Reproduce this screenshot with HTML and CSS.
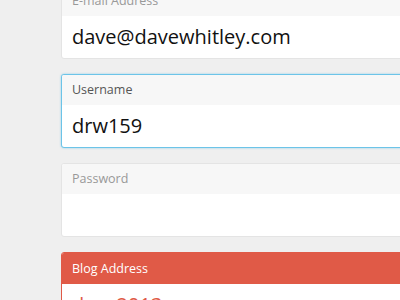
FILE: index.html
```html
<!DOCTYPE html>
<html>
<head>
<meta charset="utf-8">
<link rel="stylesheet" href="styles.css">
</head>
<body>
<div class="form">
  <div class="field">
    <div class="label">E-mail Address</div>
    <div class="value">dave@davewhitley.com</div>
  </div>
  <div class="field focus">
    <div class="label">Username</div>
    <div class="value">drw159</div>
  </div>
  <div class="field">
    <div class="label">Password</div>
    <div class="value"></div>
  </div>
  <div class="field error">
    <div class="label">Blog Address</div>
    <div class="value">dave2013</div>
  </div>
</div>
</body>
</html>
```

FILE: styles.css
```css
html, body {
  margin: 0;
  padding: 0;
  height: 100%;
  overflow: hidden;
  background: #efefef;
}
.form {
  display: flex;
  flex-direction: column;
  gap: 15px;
  padding-left: 61px;
  margin-top: -15px;
  font-family: "Open Sans", sans-serif;
}
.field {
  width: 400px;
  border: 1px solid #e4e4e4;
  border-radius: 3px;
  background: #fff;
  overflow: hidden;
}
.label {
  height: 30px;
  line-height: 30px;
  padding-left: 10px;
  background: #f7f7f7;
  font-size: 12.5px;
  color: #999;
}
.value {
  height: 42px;
  line-height: 42px;
  padding-left: 10px;
  font-size: 20px;
  color: #111;
}
.focus {
  border-color: #6cc4e8;
  box-shadow: 0 0 2px rgba(108, 196, 232, 0.8);
}
.focus .label {
  color: #555;
}
.error {
  border-color: #e05a47;
}
.error .label {
  background: #e05a47;
  color: #fff;
  height: 31px;
  line-height: 31px;
}
.error .value {
  color: #e05a47;
}
```
